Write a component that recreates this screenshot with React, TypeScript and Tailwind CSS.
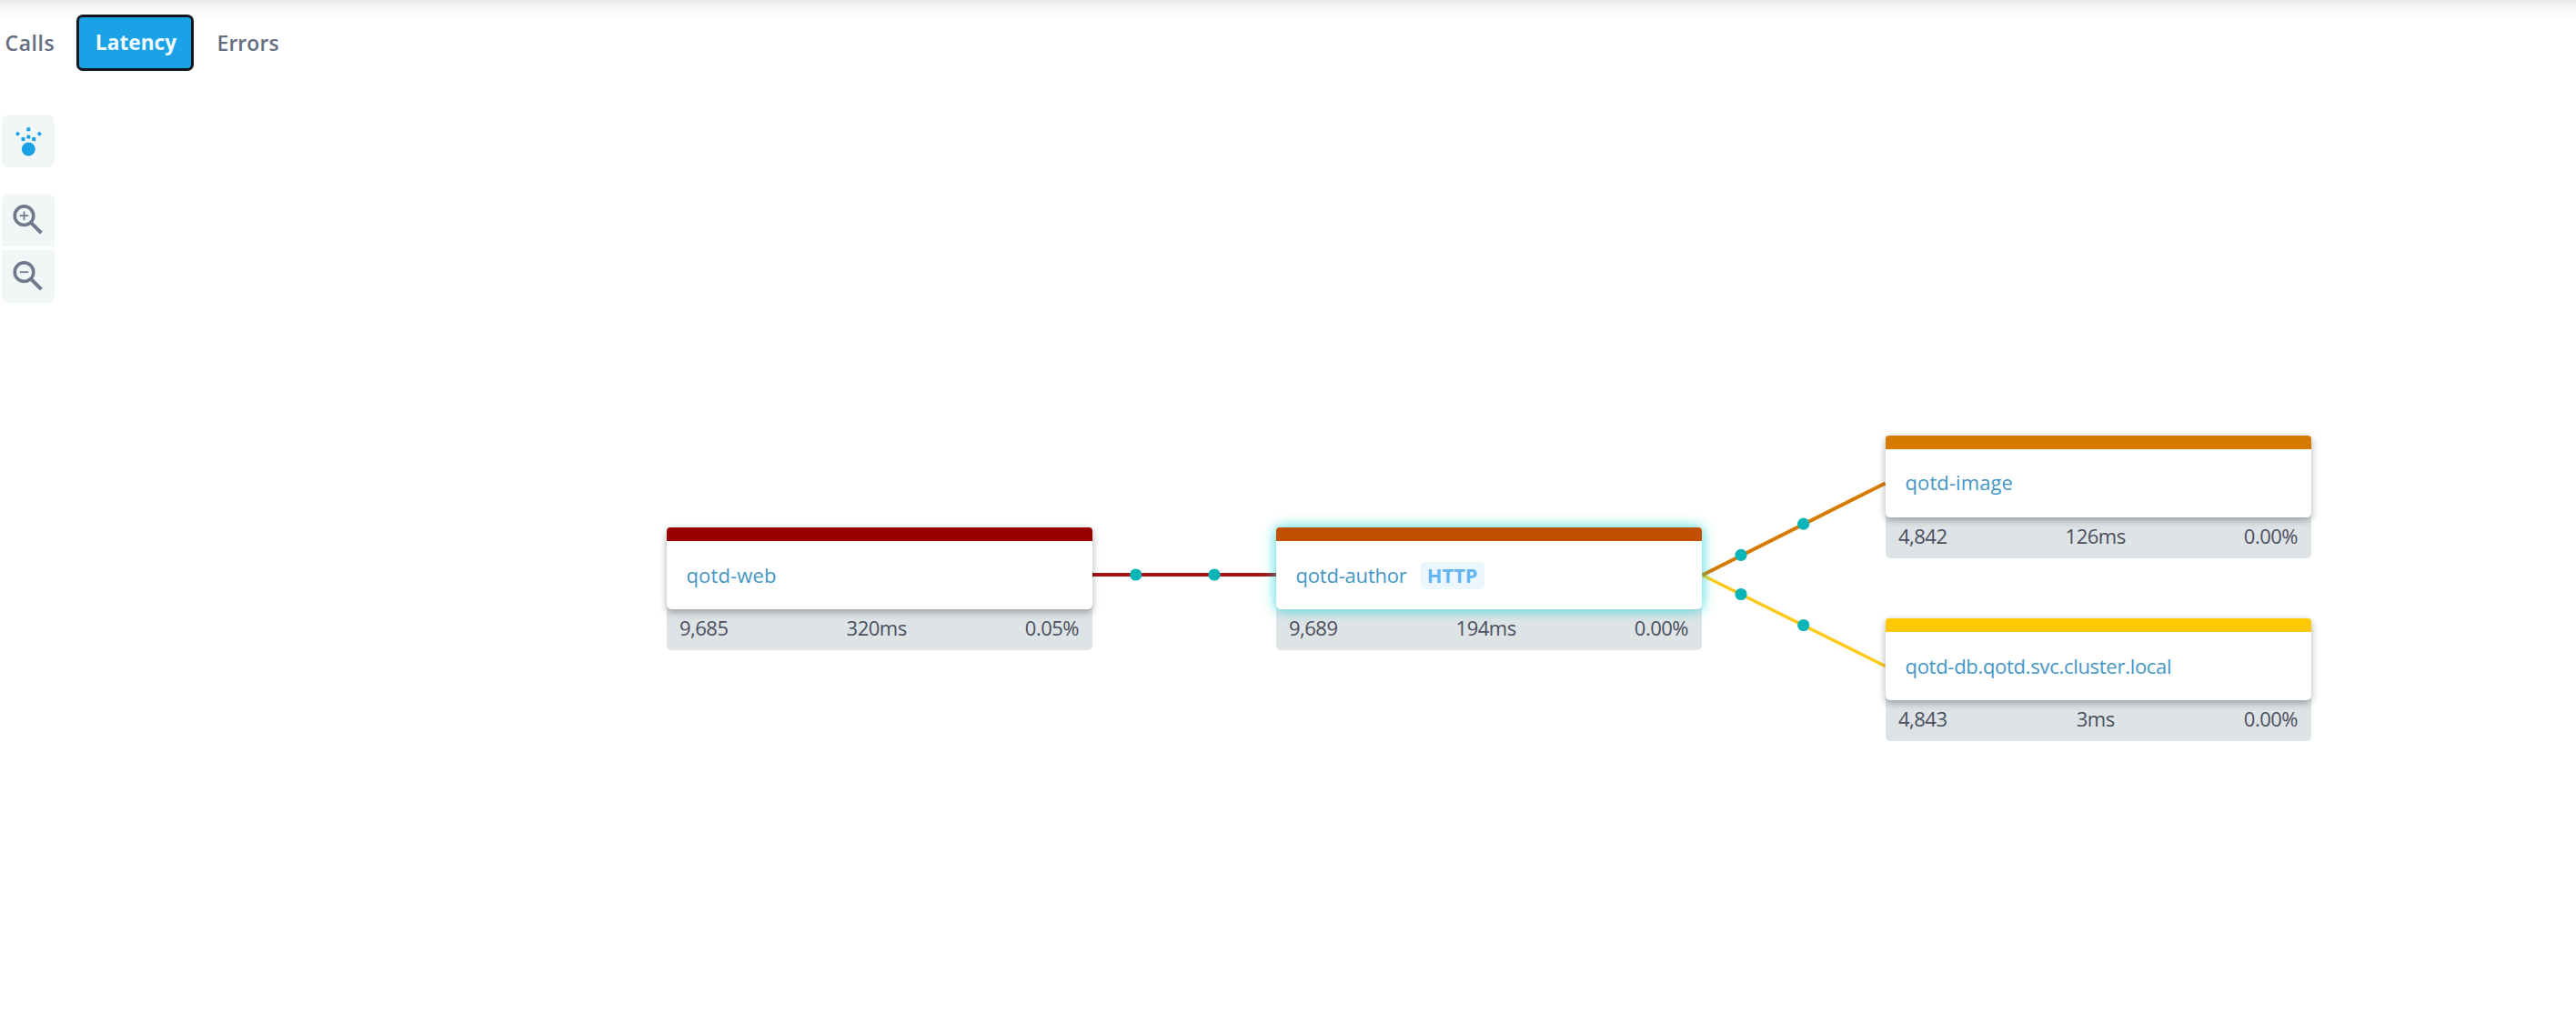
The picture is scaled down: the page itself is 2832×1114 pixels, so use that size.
import type { ReactNode } from "react";

type ServiceNode = {
  name: string;
  label: string;
  place: string;
  bar: string;
  shadow: string;
  protocol?: string;
  calls: string;
  latency: string;
  errors: string;
};

const nodes: ServiceNode[] = [
  {
    name: "qotd-web",
    label: "tracking-[0.15px] pb-[2px]",
    place: "left-[733px] top-[580px]",
    bar: "bg-[#990000]",
    shadow: "shadow-[0_3px_9px_rgba(0,0,0,0.33)]",
    calls: "9,685",
    latency: "320ms",
    errors: "0.05%",
  },
  {
    name: "qotd-author",
    label: "tracking-[-0.2px] pb-[2px]",
    place: "left-[1403px] top-[580px]",
    bar: "bg-[#c24f00]",
    shadow: "shadow-[0_0_14px_1px_rgba(0,205,205,0.7)]",
    protocol: "HTTP",
    calls: "9,689",
    latency: "194ms",
    errors: "0.00%",
  },
  {
    name: "qotd-image",
    label: "tracking-[0.1px] pb-[4px]",
    place: "left-[2073px] top-[479px]",
    bar: "bg-[#d67b00]",
    shadow: "shadow-[0_3px_9px_rgba(0,0,0,0.33)]",
    calls: "4,842",
    latency: "126ms",
    errors: "0.00%",
  },
  {
    name: "qotd-db.qotd.svc.cluster.local",
    label: "tracking-[-0.29px] pb-[2px]",
    place: "left-[2073px] top-[680px]",
    bar: "bg-[#ffc905]",
    shadow: "shadow-[0_3px_9px_rgba(0,0,0,0.33)]",
    calls: "4,843",
    latency: "3ms",
    errors: "0.00%",
  },
];

function NodeCard({ node }: { node: ServiceNode }) {
  return (
    <article className={`absolute flex w-[468px] flex-col ${node.place}`}>
      <div className={`relative z-10 flex h-[90px] flex-col rounded-[5px] bg-white ${node.shadow}`}>
        <div className={`h-[15px] shrink-0 rounded-t-[4px] ${node.bar}`} />
        <div className="flex flex-1 items-center gap-[15px] pl-[21.5px]">
          <a className={`text-[22px] leading-[30px] text-[#4396c6] ${node.label}`}>{node.name}</a>
          {node.protocol && (
            <span className="flex h-[30px] w-[70px] items-center justify-center rounded-[5px] bg-[#ebf7fd] pt-px text-[21.8px] leading-[30px] font-bold text-[#62b5f3]">
              {node.protocol}
            </span>
          )}
        </div>
      </div>
      <div className="-mt-[6px] flex h-[51px] justify-between rounded-b-[5px] bg-[#dee4e6] pt-[12px] pr-[15px] pl-[14px] text-[22px] leading-[28px] tracking-[-0.5px] text-[#4b4f5e]">
        <span>{node.calls}</span>
        <span>{node.latency}</span>
        <span>{node.errors}</span>
      </div>
    </article>
  );
}

function Edges() {
  const dots = [
    [1248.7, 632],
    [1335, 632],
    [1914, 610.3],
    [1982.7, 576.2],
    [1914, 653.5],
    [1982.7, 687.5],
  ];
  return (
    <svg className="pointer-events-none absolute inset-0" width="2832" height="1114" fill="none">
      <path d="M1201 632H1403" stroke="#a31515" strokeWidth="4" />
      <path d="M1871.5 632.5L2072.5 732.5" stroke="#ffc91a" strokeWidth="3.6" />
      <path d="M1871.5 632.5L2072.5 531.5" stroke="#d67b00" strokeWidth="4" />
      {dots.map(([x, y]) => (
        <circle key={`${x}-${y}`} cx={x} cy={y} r="6.6" fill="#0bb4b6" />
      ))}
    </svg>
  );
}

function ToolButton({ label, shape, children }: { label: string; shape: string; children: ReactNode }) {
  return (
    <button aria-label={label} className={`size-[58px] bg-[#f1f6f7] ${shape}`}>
      <svg width="58" height="58" viewBox="0 0 58 58" fill="none">
        {children}
      </svg>
    </button>
  );
}

function Magnifier({ plus }: { plus?: boolean }) {
  return (
    <g stroke="#717a8c">
      <circle cx="24.5" cy="24.2" r="10.3" strokeWidth="3.6" />
      <path d="M32 31.8L43.4 43.2" strokeWidth="4" />
      <path d={plus ? "M19.7 24.2H29.2M24.5 19.5V29" : "M19.7 24.2H29.2"} strokeWidth="1.8" />
    </g>
  );
}

export default function App() {
  return (
    <main className="relative h-[1114px] w-full overflow-hidden bg-white font-['Open_Sans',sans-serif]">
      <div className="absolute inset-x-0 top-0 h-[24px] bg-linear-to-b from-[#e9e9e9] via-[#f8f9f9] to-white" />

      <nav className="relative flex h-[62px] translate-y-[16px] items-center text-[23px] font-semibold text-[#656d80]">
        <button className="w-[84px] pl-[5.5px] text-left tracking-[0.55px]">Calls</button>
        <button className="h-[62px] w-[129px] rounded-[7px] border-[3.5px] border-[#12161b] bg-[#1ba1e6] pl-[2px] text-[22.7px] font-bold text-[#f2fbff]">
          Latency
        </button>
        <button className="pl-[25.5px] tracking-[0.05px]">Errors</button>
      </nav>

      <aside className="mt-[64px] ml-[2px] flex w-[58px] flex-col">
        <ToolButton label="Animate traffic" shape="rounded-[8px]">
          <g fill="#1ba1e6">
            <circle cx="29.3" cy="38" r="7.5" />
            <rect x="27.3" y="14.2" width="4" height="4" rx="0.5" />
            <rect x="27.3" y="22.6" width="4" height="4" rx="0.5" />
            <rect x="21.5" y="25" width="4" height="4" rx="0.5" />
            <rect x="33.2" y="25" width="4" height="4" rx="0.5" />
            <path d="M17.5 18.6l2.6 2.6-2.6 2.6-2.6-2.6zM41.3 18.6l2.6 2.6-2.6 2.6-2.6-2.6z" />
          </g>
        </ToolButton>
        <div className="mt-[29px] flex flex-col gap-[4px]">
          <ToolButton label="Zoom in" shape="rounded-t-[8px]">
            <Magnifier plus />
          </ToolButton>
          <ToolButton label="Zoom out" shape="rounded-b-[8px]">
            <Magnifier />
          </ToolButton>
        </div>
      </aside>

      {nodes.map((node) => (
        <NodeCard key={node.name} node={node} />
      ))}
      <Edges />
    </main>
  );
}
